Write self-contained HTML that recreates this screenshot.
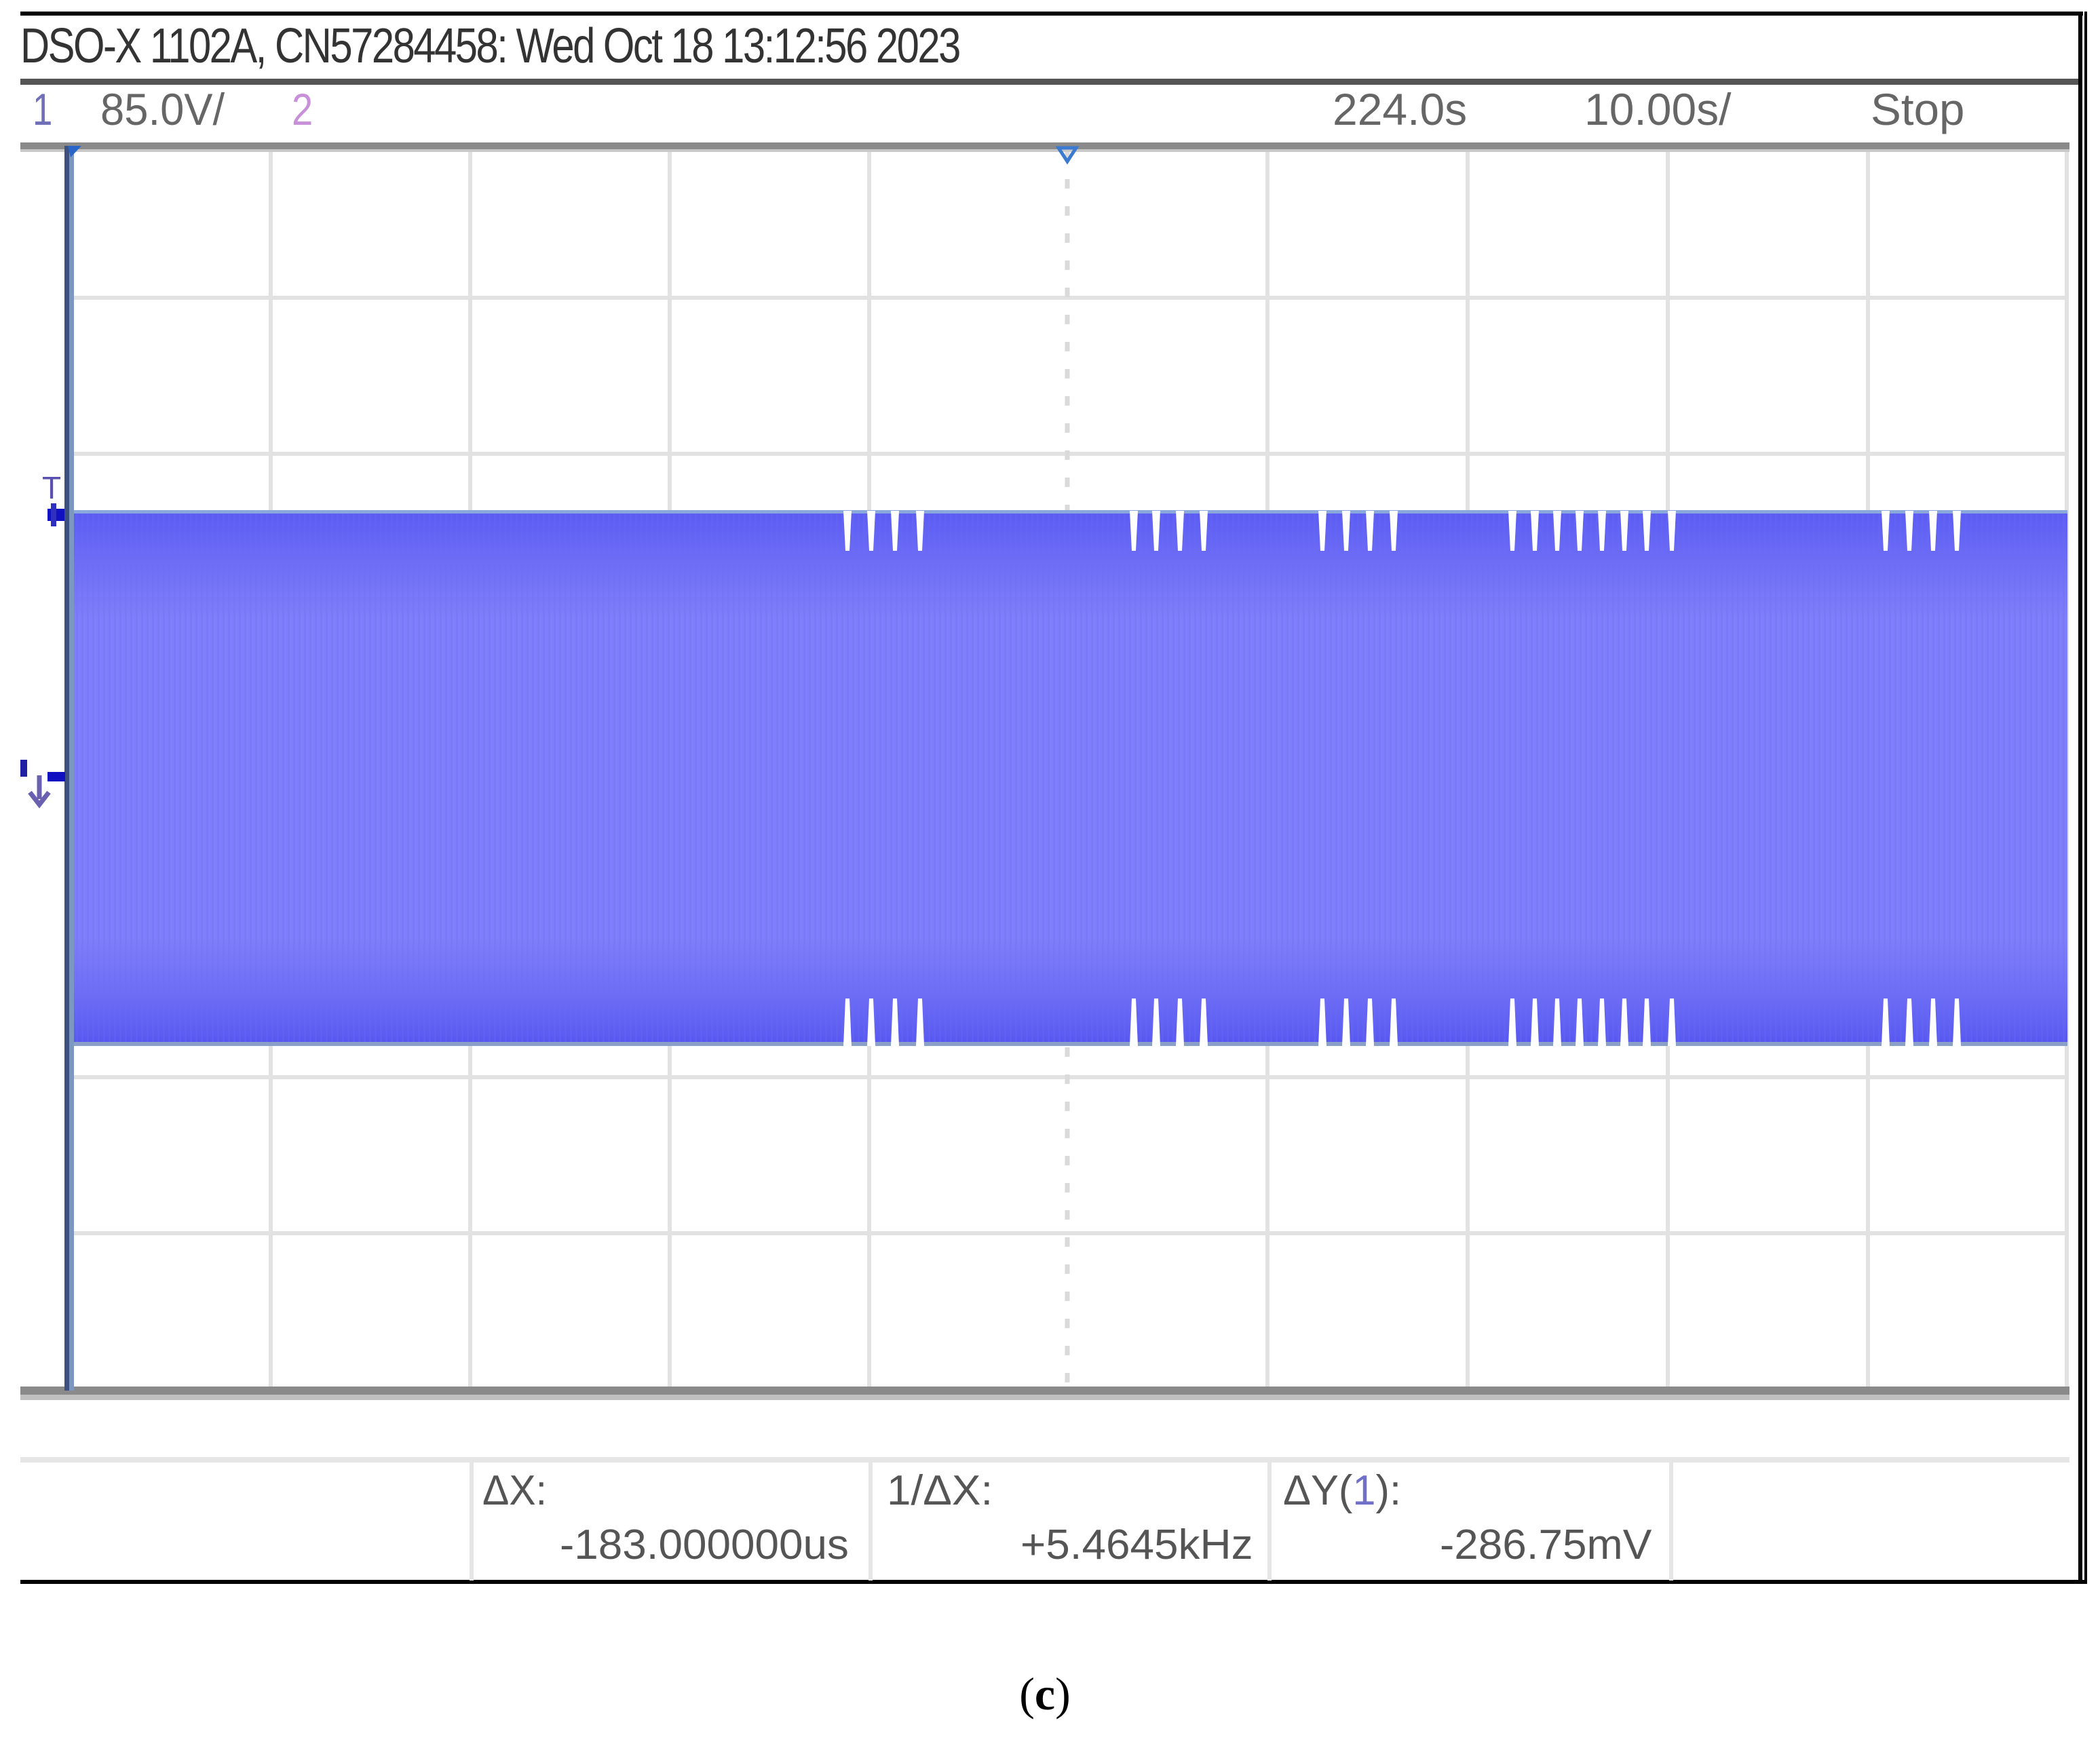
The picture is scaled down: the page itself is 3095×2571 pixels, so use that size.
<!DOCTYPE html>
<html><head><meta charset="utf-8"><style>
html,body{margin:0;padding:0;background:#fff;}
body{width:3095px;height:2571px;position:relative;overflow:hidden;}
svg{position:absolute;left:0;top:0;}
</style></head><body>
<svg width="3095" height="2571" viewBox="0 0 3095 2571" xmlns="http://www.w3.org/2000/svg">
<defs>
<linearGradient id="band" x1="0" y1="0" x2="0" y2="1">
<stop offset="0" stop-color="#5b5bf3"/>
<stop offset="0.1" stop-color="#6e6ef6"/>
<stop offset="0.2" stop-color="#7f7ff9"/>
<stop offset="0.8" stop-color="#7f7ff9"/>
<stop offset="0.9" stop-color="#6e6ef6"/>
<stop offset="1" stop-color="#5757f1"/>
</linearGradient>
<pattern id="stripes" width="8" height="10" patternUnits="userSpaceOnUse">
<rect x="0" y="0" width="3" height="10" fill="#6a6af4" opacity="0.25"/>
</pattern>
</defs>

<rect x="30" y="17" width="3040" height="6" fill="#000"/>
<rect x="3063" y="17" width="6" height="2318" fill="#000"/>
<rect x="3072" y="17" width="4" height="2318" fill="#000"/>
<rect x="30" y="2329" width="3046" height="6" fill="#000"/>

<text x="30" y="92" font-family="Liberation Sans, sans-serif" font-size="72" fill="#333" transform="translate(30 0) scale(0.83 1) translate(-30 0)" letter-spacing="-3">DSO-X 1102A, CN57284458: Wed Oct 18 13:12:56 2023</text>

<rect x="30" y="116" width="3033" height="9" fill="#555"/>

<g font-family="Liberation Sans, sans-serif" font-size="66">
<text x="48" y="184" fill="#7070b8" transform="translate(48 0) scale(0.8 1) translate(-48 0)">1</text>
<text x="148" y="184" fill="#666" transform="translate(148 0) scale(0.96 1) translate(-148 0)">85.0V/</text>
<text x="430" y="184" fill="#c890d8" transform="translate(430 0) scale(0.85 1) translate(-430 0)">2</text>
<text x="1964" y="184" fill="#666" transform="translate(1964 0) scale(1.0 1) translate(-1964 0)">224.0s</text>
<text x="2335" y="184" fill="#666" transform="translate(2335 0) scale(1.0 1) translate(-2335 0)">10.00s/</text>
<text x="2757" y="184" fill="#666" transform="translate(2757 0) scale(1.02 1) translate(-2757 0)">Stop</text>
</g>

<rect x="30" y="210" width="3020" height="10" fill="#8a8a8a"/>
<rect x="30" y="220" width="3020" height="4" fill="#c8c8c8"/>
<g fill="#e2e2e2">
<rect x="396" y="224" width="6" height="1826"/>
<rect x="690" y="224" width="6" height="1826"/>
<rect x="984" y="224" width="6" height="1826"/>
<rect x="1278" y="224" width="6" height="1826"/>
<rect x="1865" y="224" width="6" height="1826"/>
<rect x="2160" y="224" width="6" height="1826"/>
<rect x="2455" y="224" width="6" height="1826"/>
<rect x="2750" y="224" width="6" height="1826"/>
<rect x="3043" y="224" width="6" height="1826"/>
<rect x="105" y="436" width="2940" height="6" />
<rect x="105" y="666" width="2940" height="6" />
<rect x="105" y="1585" width="2940" height="6" />
<rect x="105" y="1815" width="2940" height="6" />
</g>
<line x1="1573" y1="224" x2="1573" y2="2050" stroke="#dadada" stroke-width="7" stroke-dasharray="14 26"/>
<path d="M1560 218 L1586 218 L1573 238 Z" fill="none" stroke="#3a7ad0" stroke-width="5"/>

<rect x="30" y="2044" width="3020" height="12" fill="#8a8a8a"/>
<rect x="30" y="2056" width="3020" height="8" fill="#c0c0c0"/>

<rect x="95" y="215" width="7" height="1835" fill="#3d5080"/>
<rect x="102" y="215" width="7" height="1835" fill="#7d98c0"/>
<path d="M100 215 L120 215 L104 232 Z" fill="#2a66c8"/>

<text x="62" y="735" font-family="Liberation Sans, sans-serif" font-size="46" fill="#5a50b0">T</text>
<rect x="70" y="750" width="25" height="18" fill="#1010c0"/>
<rect x="75" y="742" width="8" height="34" fill="#3030c0"/>
<rect x="70" y="1138" width="26" height="14" fill="#1010c0"/>
<rect x="30" y="1120" width="10" height="25" fill="#2020a0"/>
<path d="M58 1143 L58 1178 M44 1168 L58 1186 L72 1168" stroke="#6a60b0" stroke-width="7" fill="none"/>

<rect x="109" y="753" width="2938" height="788" fill="url(#band)"/>
<rect x="109" y="753" width="2938" height="788" fill="url(#stripes)"/>
<rect x="109" y="752" width="2938" height="5" fill="#8aa8dc"/>
<rect x="109" y="1536" width="2938" height="6" fill="#8aa0c8"/>
<g fill="#ffffff">
<path id="nt" d="M0 753 L12 753 L9 812 L3 812 Z" transform="translate(1243 0)"/>
<use href="#nt" x="35"/><use href="#nt" x="70"/><use href="#nt" x="107"/>
<use href="#nt" x="422"/><use href="#nt" x="455"/><use href="#nt" x="490"/><use href="#nt" x="525"/>
<use href="#nt" x="700"/><use href="#nt" x="735"/><use href="#nt" x="770"/><use href="#nt" x="805"/>
<use href="#nt" x="980"/><use href="#nt" x="1013"/><use href="#nt" x="1046"/><use href="#nt" x="1079"/><use href="#nt" x="1112"/><use href="#nt" x="1145"/><use href="#nt" x="1178"/><use href="#nt" x="1215"/>
<use href="#nt" x="1530"/><use href="#nt" x="1565"/><use href="#nt" x="1600"/><use href="#nt" x="1635"/>
<path id="nb" d="M0 1542 L12 1542 L9 1472 L3 1472 Z" transform="translate(1243 0)"/>
<use href="#nb" x="35"/><use href="#nb" x="70"/><use href="#nb" x="107"/>
<use href="#nb" x="422"/><use href="#nb" x="455"/><use href="#nb" x="490"/><use href="#nb" x="525"/>
<use href="#nb" x="700"/><use href="#nb" x="735"/><use href="#nb" x="770"/><use href="#nb" x="805"/>
<use href="#nb" x="980"/><use href="#nb" x="1013"/><use href="#nb" x="1046"/><use href="#nb" x="1079"/><use href="#nb" x="1112"/><use href="#nb" x="1145"/><use href="#nb" x="1178"/><use href="#nb" x="1215"/>
<use href="#nb" x="1530"/><use href="#nb" x="1565"/><use href="#nb" x="1600"/><use href="#nb" x="1635"/>
</g>

<rect x="30" y="2148" width="3020" height="8" fill="#e6e6e6"/>
<g fill="#e6e6e6">
<rect x="692" y="2156" width="6" height="174"/>
<rect x="1280" y="2156" width="6" height="174"/>
<rect x="1868" y="2156" width="6" height="174"/>
<rect x="2460" y="2156" width="6" height="174"/>
</g>
<g font-family="Liberation Sans, sans-serif" font-size="62" fill="#555">
<text x="711" y="2218" transform="translate(711 0) scale(0.95 1) translate(-711 0)">ΔX:</text>
<text x="825" y="2298" transform="translate(825 0) scale(1.03 1) translate(-825 0)">-183.000000us</text>
<text x="1307" y="2218" transform="translate(1307 0) scale(1.03 1) translate(-1307 0)">1/ΔX:</text>
<text x="1504" y="2298" transform="translate(1504 0) scale(1.03 1) translate(-1504 0)">+5.4645kHz</text>
<text x="1891" y="2218" transform="translate(1891 0) scale(0.99 1) translate(-1891 0)">ΔY(<tspan fill="#7070c8">1</tspan>):</text>
<text x="2122" y="2298" transform="translate(2122 0) scale(1.03 1) translate(-2122 0)">-286.75mV</text>
</g>

<text x="1540" y="2520" text-anchor="middle" font-family="Liberation Serif, serif" font-size="68" fill="#000">(<tspan font-weight="bold">c</tspan>)</text>
</svg>
</body></html>
